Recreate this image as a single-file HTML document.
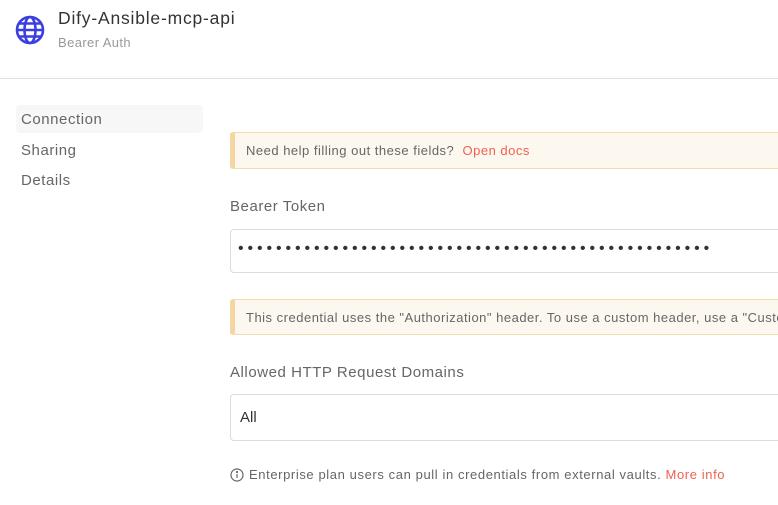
<!DOCTYPE html>
<html><head><meta charset="utf-8"><style>
*{box-sizing:border-box;margin:0;padding:0}
body{width:778px;height:505px;overflow:hidden;background:#fff;font-family:"Liberation Sans",sans-serif;color:#555;position:relative}
.abs{position:absolute;white-space:nowrap}
.callout{position:absolute;left:230px;width:548px;overflow:hidden;white-space:nowrap;background:#fdf8ef;border:1px solid #f3dcae;border-right:none;border-left:5px solid #f3d6a2;border-radius:3px 0 0 3px;font-size:13px;letter-spacing:0.5px;color:#666;padding-left:11px;display:flex;align-items:center}
.input{position:absolute;left:230px;width:548px;border:1px solid #dcdcdc;border-right:none;border-radius:4px 0 0 4px;background:#fff}
.org{color:#f0614f}
.lbl{font-size:15px;color:#666;letter-spacing:0.55px}
</style></head><body>
<svg class="abs" style="left:15px;top:15px" width="30" height="30" viewBox="0 0 30 30" fill="none" stroke="#3b3fe0" stroke-width="2.6">
<circle cx="15" cy="15" r="13"/><ellipse cx="15" cy="15" rx="5.5" ry="13"/><line x1="2" y1="15" x2="28" y2="15"/><path d="M4 8.5h22M4 21.5h22"/></svg>
<div class="abs" style="left:58px;top:8px;font-size:17.5px;color:#333;letter-spacing:0.8px">Dify-Ansible-mcp-api</div>
<div class="abs" style="left:58px;top:35px;font-size:13px;color:#999;letter-spacing:0.4px">Bearer Auth</div>
<div class="abs" style="left:0;top:78px;width:778px;height:1px;background:#e2e2e2"></div>
<div class="abs" style="left:16px;top:105px;width:187px;height:28px;background:#f7f7f7;border-radius:4px"></div>
<div class="abs lbl" style="left:21px;top:111px">Connection</div>
<div class="abs lbl" style="left:21px;top:142px">Sharing</div>
<div class="abs lbl" style="left:21px;top:172px">Details</div>
<div class="callout" style="top:132px;height:37px">Need help filling out these fields?&nbsp;&nbsp;<span class="org">Open docs</span></div>
<div class="abs lbl" style="left:230px;top:198px">Bearer Token</div>
<div class="input" style="top:229px;height:44px"></div>
<div class="abs" style="left:238px;top:240px;font-size:16px;color:#333;letter-spacing:3.9px">••••••••••••••••••••••••••••••••••••••••••••••••••</div>
<div class="callout" style="top:299px;height:36px">This credential uses the "Authorization" header. To use a custom header, use a "Custom Auth" credential instead.</div>
<div class="abs lbl" style="left:230px;top:364px">Allowed HTTP Request Domains</div>
<div class="input" style="top:394px;height:47px"></div>
<div class="abs" style="left:240px;top:409px;font-size:15px;color:#333">All</div>
<svg class="abs" style="left:230px;top:468px" width="14" height="14" viewBox="0 0 14 14" fill="none" stroke="#666" stroke-width="1.2"><circle cx="7" cy="7" r="6"/><line x1="7" y1="6" x2="7" y2="10"/><circle cx="7" cy="4" r=".5" fill="#666"/></svg>
<div class="abs" style="left:249px;top:467px;font-size:13px;color:#666;letter-spacing:0.6px">Enterprise plan users can pull in credentials from external vaults. <span class="org">More info</span></div>
</body></html>
